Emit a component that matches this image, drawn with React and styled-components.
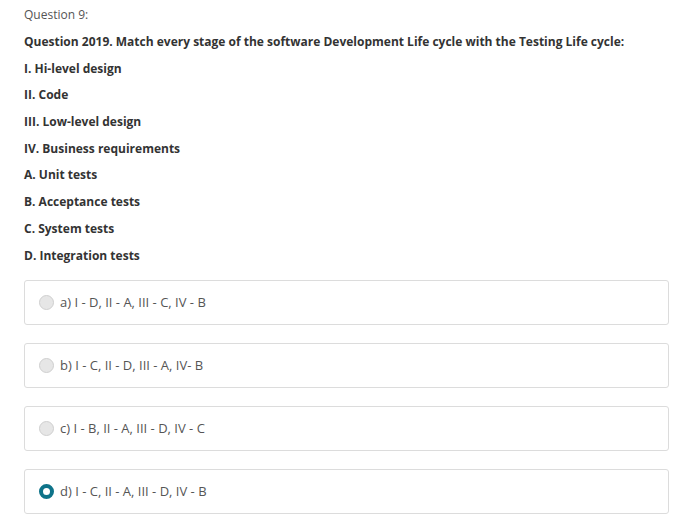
import styled, { createGlobalStyle } from "styled-components";
import { useState } from "react";

const GlobalStyle = createGlobalStyle`
  body {
    margin: 0;
    background: #fff;
    font-family: "Open Sans", "Noto Sans", sans-serif;
    color: #333;
  }
`;

const lines = [
  "I. Hi-level design",
  "II. Code",
  "III. Low-level design",
  "IV. Business requirements",
  "A. Unit tests",
  "B. Acceptance tests",
  "C. System tests",
  "D. Integration tests",
];

const options = [
  "a) I - D, II - A, III - C, IV - B",
  "b) I - C, II - D, III - A, IV- B",
  "c) I - B, II - A, III - D, IV - C",
  "d) I - C, II - A, III - D, IV - B",
];

export default function App() {
  const [picked, setPicked] = useState(3);

  return (
    <Page>
      <GlobalStyle />
      <Label>Question 9:</Label>
      <Line>
        Question 2019. Match every stage of the software Development Life cycle
        with the Testing Life cycle:
      </Line>
      {lines.map((l) => (
        <Line key={l}>{l}</Line>
      ))}
      <Options>
        {options.map((o, i) => (
          <Option key={o} onClick={() => setPicked(i)}>
            <Radio $checked={picked === i} />
            <OptionText>{o}</OptionText>
          </Option>
        ))}
      </Options>
    </Page>
  );
}

const Page = styled.div`
  padding: 6px 11px 0 24px;
`;

const Label = styled.div`
  font-size: 12px;
  line-height: 18px;
  color: #555;
  margin-bottom: 9px;
`;

const Line = styled.p`
  margin: 0 0 8.7px;
  font-size: 12px;
  line-height: 18px;
  font-weight: 700;
  color: #333;
`;

const Options = styled.div`
  display: flex;
  flex-direction: column;
  gap: 18px;
  margin-top: 15px;
`;

const Option = styled.label`
  display: flex;
  align-items: center;
  height: 45px;
  box-sizing: border-box;
  border: 1px solid #dcdcdc;
  border-radius: 3px;
  padding-left: 14px;
  cursor: pointer;
`;

const Radio = styled.span`
  width: 15px;
  height: 15px;
  box-sizing: border-box;
  border-radius: 50%;
  flex-shrink: 0;
  background: ${(p) => (p.$checked ? "#fff" : "#e6e6e6")};
  border: ${(p) => (p.$checked ? "4px solid #0e7389" : "1px solid #cfcfcf")};
  margin-right: 6px;
`;

const OptionText = styled.span`
  font-size: 13px;
  color: #555;
`;
